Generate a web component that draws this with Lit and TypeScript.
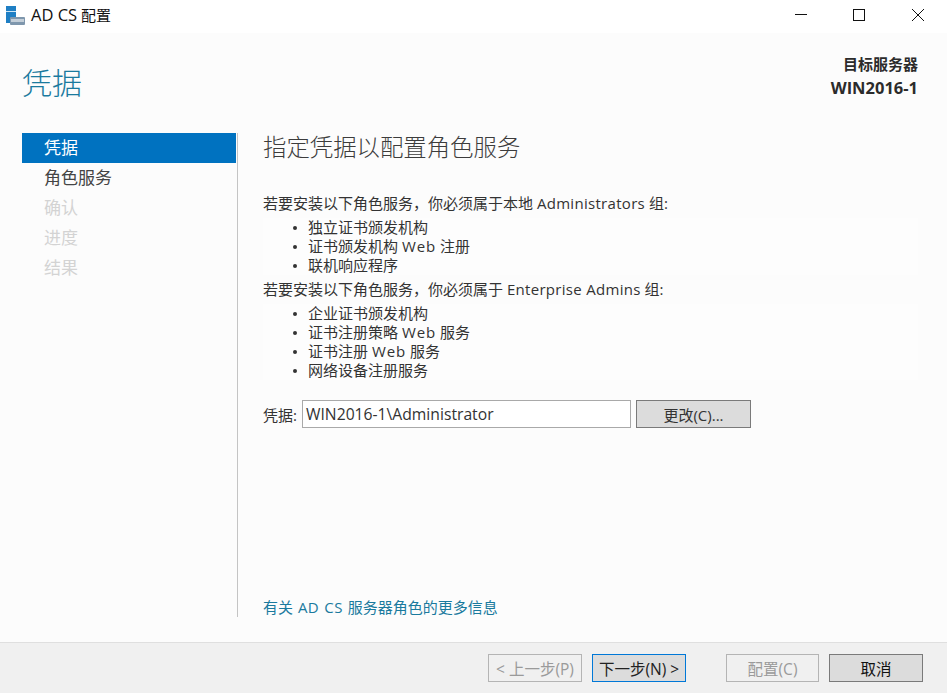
import { LitElement, html, css } from "lit";
import { customElement } from "lit/decorators.js";

@customElement("app-root")
export class AppRoot extends LitElement {
  static styles = css`
    :host { display: block; width: 947px; height: 693px; overflow: hidden; font-family: "Open Sans", "Noto Sans CJK SC", sans-serif; color: #333; background: #fcfcfc; }
    * { box-sizing: border-box; }
    .win { display: flex; flex-direction: column; height: 693px; }
    .titlebar { height: 33px; background: #fff; display: flex; align-items: center; padding-left: 6px; flex: none; }
    .appicon { width: 20px; height: 20px; margin-top: -2px; flex: none; }
    .title { margin-left: 5px; font-size: 15px; color: #111; margin-top: -4px; }
    .title .l { font-size: 16.5px; }
    .winbtns { margin-left: auto; display: flex; margin-top: -3px; }
    .winbtn { width: 58px; height: 16px; display: flex; align-items: center; justify-content: center; }
    .winbtn:nth-child(2) { margin-right: 1px; }
    .winbtn svg { width: 14px; height: 14px; }
    .header { height: 100px; flex: none; display: flex; justify-content: space-between; padding: 0 29px 0 22px; }
    .h1 { font-size: 30px; font-weight: 300; color: #1a7a9e; line-height: 40px; margin-top: 30px; }
    .server { text-align: right; font-size: 15px; font-weight: 700; color: #2b2b2b; line-height: 24px; margin-top: 19px; }
    .server .name { font-size: 16.5px; }
    .main { flex: 1; display: flex; min-height: 0; padding-bottom: 25px; }
    .side { width: 216px; margin-left: 22px; flex: none; border-right: 1px solid #c4c4c4; }
    .nav { height: 30px; line-height: 30px; padding-left: 22px; font-size: 17px; color: #444; }
    .nav.sel { background: #0072c0; color: #fff; height: 29.5px; margin-right: 1px; }
    .nav.dis { color: #d3d3d3; }
    .content { flex: 1; padding: 0 29px 0 25px; display: flex; flex-direction: column; }
    .h2 { font-size: 23.4px; font-weight: 300; color: #3c3c3c; line-height: 28px; margin-bottom: 28px; }
    .p { font-size: 15px; line-height: 29px; color: #333; height: 29px; }
    .p .l { letter-spacing: 0.3px; }
    ul { margin: 0; padding: 0 0 0 45px; list-style: none; background: #fdfdfd; font-size: 15px; color: #333; }
    li { height: 19px; line-height: 19px; position: relative; }
    li .l { letter-spacing: 0.9px; }
    li::before { content: ""; position: absolute; left: -15px; top: 8px; width: 4px; height: 4px; border-radius: 50%; background: #333; }
    .cred { display: flex; align-items: center; margin-top: 20px; font-size: 15px; }
    .cred label { width: 39px; }
    .input { width: 329px; height: 28px; border: 1px solid #a9a9a9; background: #fff; font-size: 15.7px; line-height: 26px; padding-left: 3px; color: #333; }
    .btn { height: 28px; border: 1px solid #7a7a7a; background: #dcdcdc; font-size: 15px; color: #333; display: flex; align-items: center; justify-content: center; }
    .change { width: 115px; margin-left: 5px; }
    .link { margin-top: auto; font-size: 15px; color: #1a7a9e; line-height: 20px; word-spacing: 1px; }
    .link .l { letter-spacing: 0.4px; }
    .footer { height: 51px; flex: none; background: #f0f0f0; border-top: 1px solid #dfdfdf; display: flex; align-items: center; padding: 0 0 0 488px; }
    .fbtn { width: 94px; height: 28px; font-size: 15.5px; }
    .disabled { background: #f0f0f0; border-color: #b4b4b4; color: #9a9a9a; }
    .primary { border: 1px solid #0078d7; background: #dcdcdc; color: #222; margin-left: 10px; }
    .cfg { margin-left: 40px; width: 93px; }
    .cancel { margin-left: 10px; color: #111; }
  `;

  render() {
    return html`
      <div class="win">
        <div class="titlebar">
          <svg class="appicon" viewBox="0 0 20 20">
            <rect x="0" y="0" width="10" height="17" fill="#1f7fc4" />
            <rect x="0" y="5" width="10" height="1" fill="#cfe6f5" />
            <rect x="4" y="11" width="15" height="8" rx="1" fill="#7f97ad" />
            <rect x="5" y="13" width="13" height="3" fill="#c3ced8" />
          </svg>
          <span class="title"><span class="l">AD CS</span> 配置</span>
          <div class="winbtns">
            <div class="winbtn"><svg viewBox="0 0 14 14"><path d="M1 6.5h12" stroke="#111" fill="none"/></svg></div>
            <div class="winbtn"><svg viewBox="0 0 14 14"><rect x="1.5" y="1.5" width="11" height="11" stroke="#111" fill="none"/></svg></div>
            <div class="winbtn"><svg viewBox="0 0 14 14"><path d="M1 1l12 12M13 1L1 13" stroke="#111" fill="none"/></svg></div>
          </div>
        </div>
        <div class="header">
          <div class="h1">凭据</div>
          <div class="server">目标服务器<br /><span class="name">WIN2016-1</span></div>
        </div>
        <div class="main">
          <div class="side">
            <div class="nav sel">凭据</div>
            <div class="nav">角色服务</div>
            <div class="nav dis">确认</div>
            <div class="nav dis">进度</div>
            <div class="nav dis">结果</div>
          </div>
          <div class="content">
            <div class="h2">指定凭据以配置角色服务</div>
            <div class="p">若要安装以下角色服务，你必须属于本地 <span class="l">Administrators</span> 组:</div>
            <ul>
              <li>独立证书颁发机构</li>
              <li>证书颁发机构 <span class="l">Web</span> 注册</li>
              <li>联机响应程序</li>
            </ul>
            <div class="p">若要安装以下角色服务，你必须属于 <span class="l">Enterprise Admins</span> 组:</div>
            <ul>
              <li>企业证书颁发机构</li>
              <li>证书注册策略 <span class="l">Web</span> 服务</li>
              <li>证书注册 <span class="l">Web</span> 服务</li>
              <li>网络设备注册服务</li>
            </ul>
            <div class="cred">
              <label>凭据:</label>
              <div class="input">WIN2016-1\\Administrator</div>
              <div class="btn change">更改(C)...</div>
            </div>
            <div class="link">有关 <span class="l">AD CS</span> 服务器角色的更多信息</div>
          </div>
        </div>
        <div class="footer">
          <div class="btn fbtn disabled">&lt; 上一步(P)</div>
          <div class="btn fbtn primary">下一步(N) &gt;</div>
          <div class="btn fbtn disabled cfg">配置(C)</div>
          <div class="btn fbtn cancel">取消</div>
        </div>
      </div>
    `;
  }
}
